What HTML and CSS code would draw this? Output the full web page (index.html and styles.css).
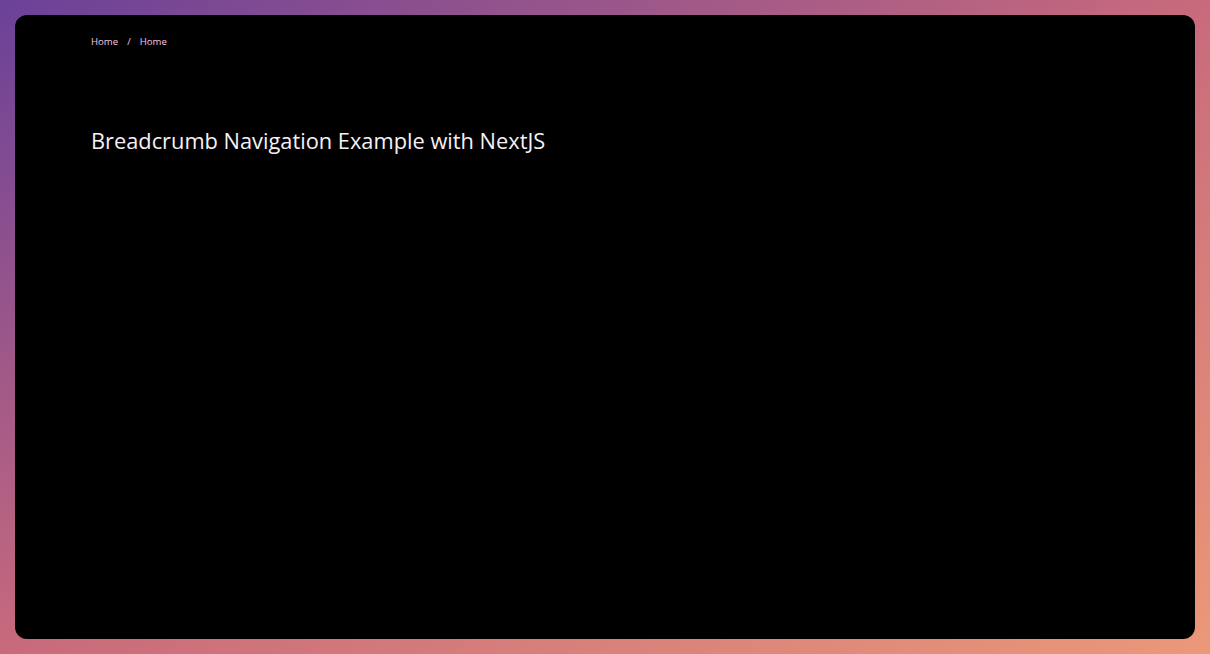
FILE: index.html
```html
<!DOCTYPE html>
<html lang="en">
<head>
<meta charset="utf-8">
<title>Breadcrumb Navigation Example with NextJS</title>
<link rel="stylesheet" href="styles.css">
</head>
<body>
<div class="frame">
  <main class="screen">
    <nav class="breadcrumb" aria-label="Breadcrumb">
      <a class="crumb" href="#">Home</a>
      <span class="sep">/</span>
      <a class="crumb" href="#">Home</a>
    </nav>
    <h1 class="title">Breadcrumb Navigation Example with NextJS</h1>
  </main>
</div>
</body>
</html>
```

FILE: styles.css
```css
html, body {
  margin: 0;
  padding: 0;
  height: 100%;
}

body {
  font-family: "Open Sans", "Noto Sans", "DejaVu Sans", sans-serif;
  background: linear-gradient(to bottom right, #6a4199 0%, #c86a7c 50%, #ec9878 100%);
}

.frame {
  box-sizing: border-box;
  height: 100%;
  padding: 15px;
  display: flex;
}

.screen {
  flex: 1;
  background: #000;
  border-radius: 12px;
  padding: 20px 76px 0;
  display: flex;
  flex-direction: column;
}

.breadcrumb {
  display: flex;
  align-items: center;
  gap: 9px;
  font-size: 9.6px;
  line-height: 14px;
}

.crumb {
  color: #fcc8e4;
  text-decoration: none;
}

.sep {
  color: #fcc8e4;
}

.title {
  margin: 78px 0 0;
  font-size: 21.8px;
  font-weight: 400;
  line-height: 28px;
  color: #f7f0f7;
}
```
